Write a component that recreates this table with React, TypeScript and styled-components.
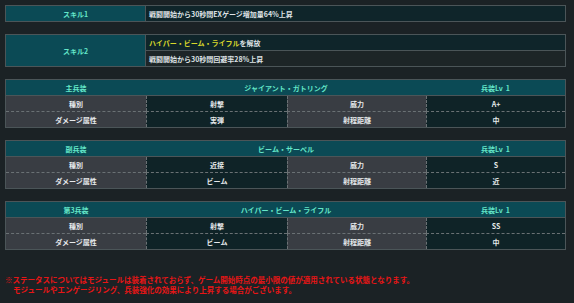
import { createGlobalStyle, styled } from 'styled-components';

const GlobalStyle = createGlobalStyle`
  html, body {
    margin: 0;
    padding: 0;
    background: #1b2225;
  }
  body {
    font-family: 'Noto Sans CJK JP', 'Noto Sans', sans-serif;
    color: #e8ecee;
  }
`;

const Page = styled.div`
  width: 561px;
  padding: 5px;
  display: flex;
  flex-direction: column;
  gap: 12px;
`;

const SkillTable = styled.div`
  display: grid;
  grid-template-columns: 140px 1fr;
  border: 1px solid #4b5558;
`;

const SkillLabel = styled.div<{ $rows: number }>`
  grid-row: span ${(p) => p.$rows};
  background: #0b4a55;
  color: #63e6c8;
  font-size: 7px;
  font-weight: bold;
  display: flex;
  align-items: center;
  justify-content: center;
  border-right: 1px solid #4b5558;
`;

const SkillText = styled.div<{ $dark?: boolean; $divided?: boolean }>`
  height: 15px;
  padding-left: 3px;
  display: flex;
  align-items: center;
  font-size: 7px;
  font-weight: bold;
  color: #dfe3e6;
  background: ${(p) => (p.$dark ? '#1d2527' : '#0f252a')};
  border-top: ${(p) => (p.$divided ? '1px solid #4b5558' : 'none')};
`;

const Highlight = styled.span`
  color: #d8d62a;
`;

const WeaponTable = styled.div`
  display: grid;
  grid-template-columns: 140px 141px 139px 1fr;
  border: 1px solid #4b5558;
`;

const HeaderRow = styled.div`
  grid-column: 1 / -1;
  display: grid;
  grid-template-columns: 140px 280px 1fr;
  height: 15px;
  background: #0b4a55;
  border-bottom: 1px solid #4b5558;
  color: #63e6c8;
  font-size: 7px;
  font-weight: bold;
`;

const HeaderCell = styled.div`
  display: flex;
  align-items: center;
  justify-content: center;
  white-space: pre;
`;

const Cell = styled.div<{ $kind: 'label' | 'value'; $last?: boolean; $first?: boolean }>`
  height: 15px;
  display: flex;
  align-items: center;
  justify-content: center;
  font-size: 7px;
  font-weight: bold;
  color: #e6e9eb;
  background: ${(p) => (p.$kind === 'label' ? '#393d43' : '#0f2327')};
  border-left: ${(p) => (p.$first ? 'none' : '1px dashed #6a7174')};
  border-top: ${(p) => (p.$last ? '1px dashed #6a7174' : 'none')};
`;

const Note = styled.div`
  margin-top: 13px;
  color: #e81515;
  font-size: 7.5px;
  font-weight: bold;
  line-height: 9.5px;
`;

const NoteIndent = styled.div`
  padding-left: 8px;
`;

type Weapon = {
  slot: string;
  name: string;
  kind: string;
  power: string;
  attr: string;
  range: string;
};

const weapons: Weapon[] = [
  { slot: '主兵装', name: 'ジャイアント・ガトリング', kind: '射撃', power: 'A+', attr: '実弾', range: '中' },
  { slot: '副兵装', name: 'ビーム・サーベル', kind: '近接', power: 'S', attr: 'ビーム', range: '近' },
  { slot: '第3兵装', name: 'ハイパー・ビーム・ライフル', kind: '射撃', power: 'SS', attr: 'ビーム', range: '中' },
];

const WeaponBlock = ({ w }: { w: Weapon }) => (
  <WeaponTable>
    <HeaderRow>
      <HeaderCell>{w.slot}</HeaderCell>
      <HeaderCell>{w.name}</HeaderCell>
      <HeaderCell>{'兵装Lv  1'}</HeaderCell>
    </HeaderRow>
    <Cell $kind="label" $first>種別</Cell>
    <Cell $kind="value">{w.kind}</Cell>
    <Cell $kind="label">威力</Cell>
    <Cell $kind="value">{w.power}</Cell>
    <Cell $kind="label" $first $last>ダメージ属性</Cell>
    <Cell $kind="value" $last>{w.attr}</Cell>
    <Cell $kind="label" $last>射程距離</Cell>
    <Cell $kind="value" $last>{w.range}</Cell>
  </WeaponTable>
);

const App = () => (
  <>
    <GlobalStyle />
    <Page>
      <SkillTable>
        <SkillLabel $rows={1}>スキル1</SkillLabel>
        <SkillText>戦闘開始から30秒間EXゲージ増加量64%上昇</SkillText>
      </SkillTable>
      <SkillTable>
        <SkillLabel $rows={2}>スキル2</SkillLabel>
        <SkillText>
          <Highlight>ハイパー・ビーム・ライフル</Highlight>を解放
        </SkillText>
        <SkillText $dark $divided>戦闘開始から30秒間回避率28%上昇</SkillText>
      </SkillTable>
      {weapons.map((w) => (
        <WeaponBlock key={w.slot} w={w} />
      ))}
      <Note>
        <div>※ステータスについてはモジュールは装着されておらず、ゲーム開始時点の最小限の値が適用されている状態となります。</div>
        <NoteIndent>モジュールやエンゲージリング、兵装強化の効果により上昇する場合がございます。</NoteIndent>
      </Note>
    </Page>
  </>
);

export default App;
